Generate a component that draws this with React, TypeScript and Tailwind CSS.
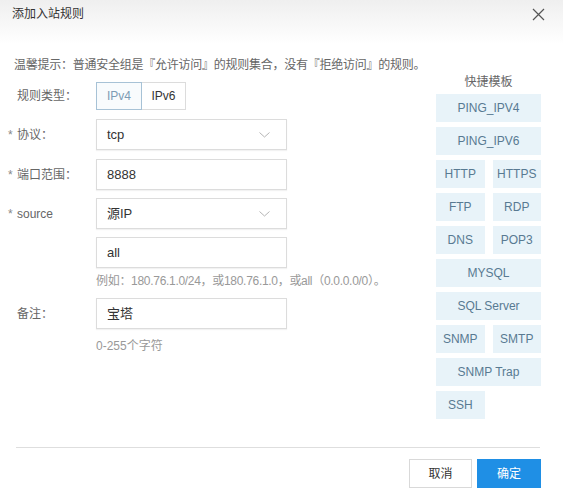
import React, { useState } from 'react';

const font = { fontFamily: '"Liberation Sans", "Noto Sans CJK SC", sans-serif' };

const quick: { name: string; wide?: boolean }[] = [
  { name: 'PING_IPV4', wide: true },
  { name: 'PING_IPV6', wide: true },
  { name: 'HTTP' },
  { name: 'HTTPS' },
  { name: 'FTP' },
  { name: 'RDP' },
  { name: 'DNS' },
  { name: 'POP3' },
  { name: 'MYSQL', wide: true },
  { name: 'SQL Server', wide: true },
  { name: 'SNMP' },
  { name: 'SMTP' },
  { name: 'SNMP Trap', wide: true },
  { name: 'SSH' },
];

const Chevron = () => (
  <svg width="11" height="6" viewBox="0 0 11 6" fill="none">
    <path d="M0.5 0.5L5.5 5L10.5 0.5" stroke="#b5b5b5" strokeWidth="1" />
  </svg>
);

const Label: React.FC<{ text: string; required?: boolean }> = ({ text, required }) => (
  <div className="w-[88px] shrink-0 flex text-[12px] text-[#666]">
    <span className="w-[9px] text-[#888]">{required ? '*' : ''}</span>
    <span>{text}</span>
  </div>
);

const Box: React.FC<{ children: React.ReactNode; select?: boolean }> = ({ children, select }) => (
  <div className="w-[191px] h-[31px] border border-[#dcdcdc] bg-white shadow-[0_1px_1px_rgba(0,0,0,0.05)] flex items-center justify-between pl-[10px] pr-[16px] text-[13px] text-[#333]">
    <span>{children}</span>
    {select && <Chevron />}
  </div>
);

export default function App() {
  const [ipType, setIpType] = useState<'v4' | 'v6'>('v4');

  return (
    <div className="w-[563px] h-[492px] bg-white overflow-hidden" style={font}>
      {/* Header */}
      <div className="h-[44px] bg-gradient-to-b from-[#efefef] to-white flex justify-between pl-[12px] pr-[18px] pt-[6px]">
        <span className="text-[12px] leading-[16px] text-[#333]">添加入站规则</span>
        <svg width="13" height="13" viewBox="0 0 13 13" className="mt-[2px]">
          <path d="M1 1L12 12M12 1L1 12" stroke="#555" strokeWidth="1.2" />
        </svg>
      </div>

      {/* Tip */}
      <div className="mt-[13px] pl-[14px] text-[12px] leading-[16px] text-[#666] tracking-[-0.25px]">
        温馨提示：普通安全组是『允许访问』的规则集合，没有『拒绝访问』的规则。
      </div>

      <div className="flex justify-between pl-[8px] pr-[22px]">
        {/* Form */}
        <div className="pt-[9px] flex flex-col">
          <div className="flex items-center h-[28px]">
            <Label text="规则类型：" />
            <div className="flex text-[12px]">
              <button
                onClick={() => setIpType('v4')}
                className={`w-[46px] h-[28px] border ${ipType === 'v4' ? 'border-[#a7c2d6] bg-[#f8fbfd] text-[#7d9bb4]' : 'border-[#dcdcdc] text-[#333]'}`}
              >
                IPv4
              </button>
              <button
                onClick={() => setIpType('v6')}
                className={`w-[44px] h-[28px] border border-l-0 ${ipType === 'v6' ? 'border-[#a7c2d6] bg-[#f8fbfd] text-[#7d9bb4]' : 'border-[#dcdcdc] text-[#333]'}`}
              >
                IPv6
              </button>
            </div>
          </div>

          <div className="flex items-center mt-[9px]">
            <Label text="协议：" required />
            <Box select>tcp</Box>
          </div>

          <div className="flex items-center mt-[9px]">
            <Label text="端口范围：" required />
            <Box>8888</Box>
          </div>

          <div className="flex items-center mt-[8px]">
            <Label text="source" required />
            <Box select>源IP</Box>
          </div>

          <div className="flex items-center mt-[8px]">
            <div className="w-[88px] shrink-0" />
            <Box>all</Box>
          </div>

          <div className="pl-[88px] mt-[5px] text-[12px] leading-[16px] text-[#999] tracking-[-0.3px]">
            例如：180.76.1.0/24，或180.76.1.0，或all（0.0.0.0/0）。
          </div>

          <div className="flex items-center mt-[9px]">
            <Label text="备注：" />
            <Box>宝塔</Box>
          </div>

          <div className="pl-[88px] mt-[9px] text-[12px] leading-[16px] text-[#999]">0-255个字符</div>
        </div>

        {/* Quick templates */}
        <div className="w-[105px] flex flex-col">
          <div className="text-center text-[12px] leading-[16px] text-[#666] mt-[1px]">快捷模板</div>
          <div className="mt-[4px] grid grid-cols-2 gap-x-[8px] gap-y-[5px]">
            {quick.map((q) => (
              <div
                key={q.name}
                className={`${q.wide ? 'col-span-2' : ''} h-[28px] bg-[#e8f3f9] text-[#587a92] text-[12px] flex items-center justify-center`}
              >
                {q.name}
              </div>
            ))}
          </div>
        </div>
      </div>

      {/* Footer */}
      <div className="ml-[16px] mr-[23px] mt-[28px] border-t border-[#dedede]" />
      <div className="flex justify-end gap-[5px] pr-[22px] mt-[11px]">
        <button className="w-[63px] h-[29px] border border-[#d9d9d9] bg-white text-[12px] text-[#333]">取消</button>
        <button className="w-[64px] h-[29px] bg-[#1f8fe5] text-[12px] text-white">确定</button>
      </div>
    </div>
  );
}
